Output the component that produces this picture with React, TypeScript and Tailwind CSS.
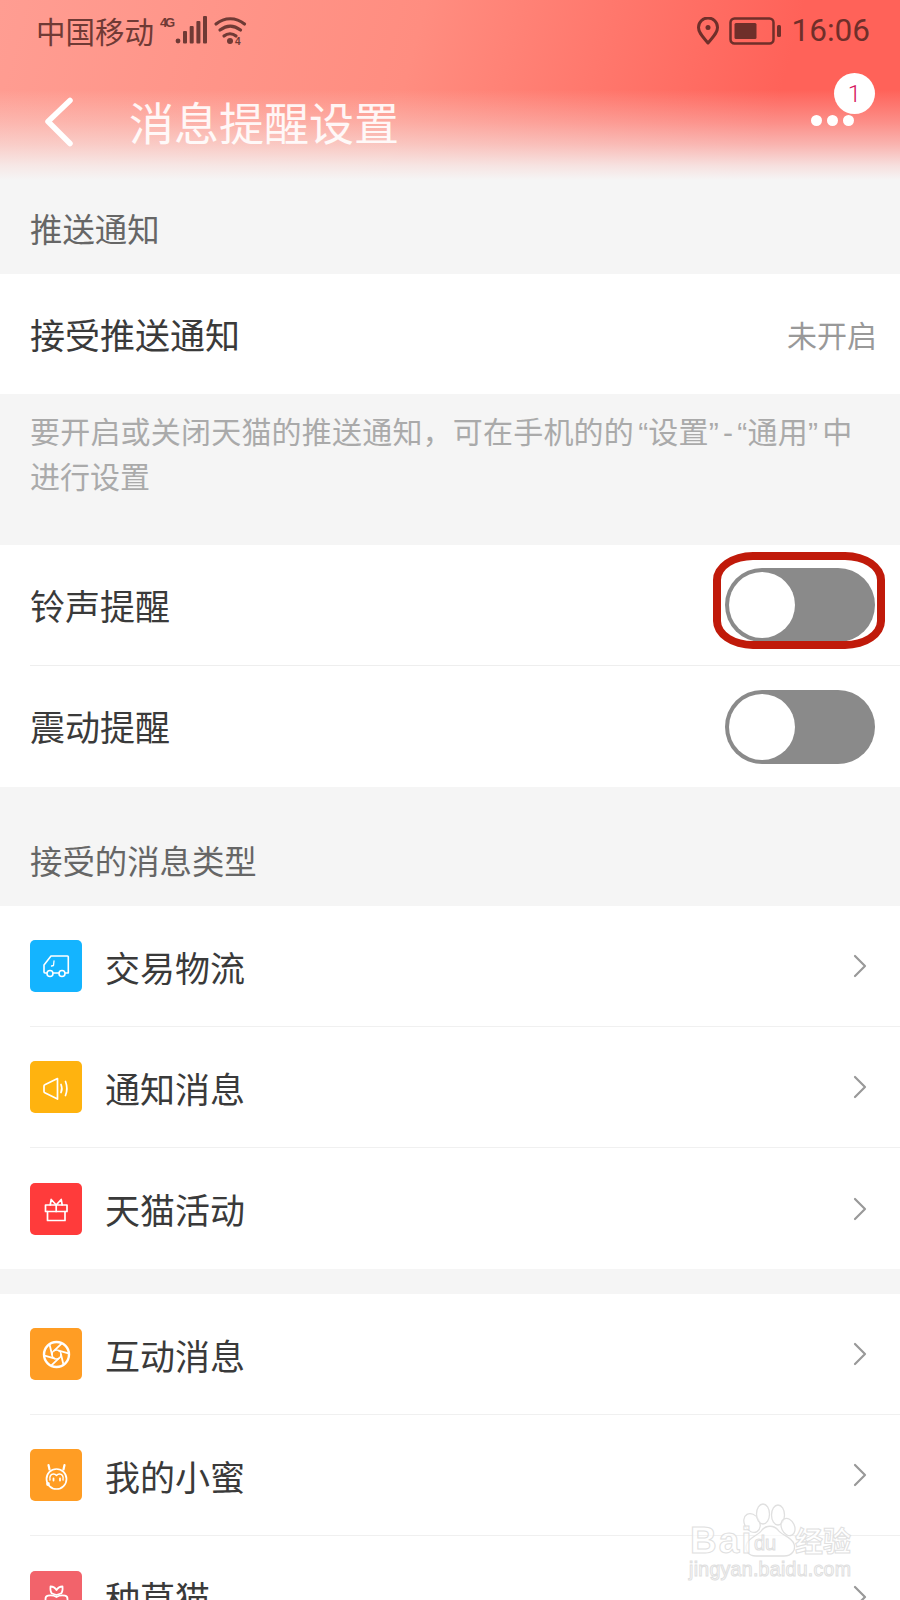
import type { ReactNode } from "react";

const cjk = "font-['Noto_Sans_CJK_SC','Noto_Sans',sans-serif]";

function Chevron() {
  return (
    <svg width="14" height="24" viewBox="0 0 14 24" fill="none" className="shrink-0">
      <path d="M2 2l10 10L2 22" stroke="#999" strokeWidth="2.2" strokeLinecap="round" strokeLinejoin="round" />
    </svg>
  );
}

function Switch() {
  return (
    <div className="flex h-[74px] w-[150px] items-center rounded-full bg-[#8a8a8a] pl-[4px]">
      <div className="h-[66px] w-[66px] rounded-full bg-white" />
    </div>
  );
}

function SectionTitle({ children }: { children: ReactNode }) {
  return (
    <div className="flex h-[94px] items-center bg-[#f5f5f5] pl-[30px] pt-[2px] text-[32.4px] text-[#666]">
      {children}
    </div>
  );
}

const truck = (
  <g fill="none" stroke="#fff" strokeWidth="1.6" strokeLinecap="round" strokeLinejoin="round">
    <path d="M16.500 33H15c-.6 0-1-.4-1-1v-7l7-9h16.500a.8.8 0 01.8.8V33h-3" />
    <path d="M23 33h6" />
    <path d="M24 21l-.5 4.500-2 .5" strokeWidth="1.300" />
    <circle cx="20" cy="33.500" r="3" />
    <circle cx="32" cy="33.500" r="3" />
  </g>
);

const speaker = (
  <g fill="none" stroke="#fff" strokeWidth="1.700" strokeLinecap="round" strokeLinejoin="round">
    <path d="M14 25v5.500c0 .6.300 1 .8 1.200L27.500 38V17.500L14.800 23.800c-.5.200-.8.600-.8 1.200z" />
    <path d="M31 23.500c1.200 2.700 1.200 5.300 0 8" />
    <path d="M35.500 20.500c1.800 4.600 1.800 9.400 0 14" />
  </g>
);

const gift = (
  <g fill="none" stroke="#fff" strokeWidth="1.700" strokeLinecap="round" strokeLinejoin="round">
    <rect x="15.500" y="22" width="21.500" height="6.500" />
    <path d="M17.500 28.500V37.500H35V28.500" />
    <path d="M26.200 22v6.500" />
    <path d="M26.200 22l-5-5.500-1 5.500M26.200 22l5-5.500 1 5.500" />
  </g>
);

// six aperture blades between the hub and the ring
const blades = [0, 60, 120, 180, 240, 300].map((d) => {
  const a = (d * Math.PI) / 180;
  const b = ((d + 55) * Math.PI) / 180;
  return `M${26.5 + 4.5 * Math.cos(a)} ${26.5 + 4.5 * Math.sin(a)}L${26.5 + 12 * Math.cos(b)} ${26.5 + 12 * Math.sin(b)}`;
});

const shutter = (
  <g fill="none" stroke="#fff" strokeWidth="1.800" strokeLinecap="round">
    <circle cx="26.500" cy="26.500" r="12.500" strokeWidth="2.400" />
    <circle cx="26.500" cy="26.500" r="4.500" strokeWidth="1.600" />
    {blades.map((d) => (
      <path key={d} d={d} />
    ))}
  </g>
);

const mi = (
  <g fill="none" stroke="#fff" strokeWidth="1.700" strokeLinecap="round" strokeLinejoin="round">
    <circle cx="26.500" cy="30" r="10" />
    <path d="M18.500 16l1 4.500M34.500 16l-1 4.500" strokeWidth="2.200" />
    <path d="M20 31c-.8-4 1-6 3.500-6 1.300 0 2.300.6 3 1.500.7-.9 1.700-1.500 3-1.500 2.500 0 4.300 2 3.500 6" strokeWidth="1.400" />
    <path d="M23.500 29.500v2M30 29.500v2" strokeWidth="1.800" />
    <circle cx="18" cy="35" r="1.900" fill="#fff" stroke="none" />
  </g>
);

const sprout = (
  <g fill="none" stroke="#fff" strokeWidth="1.800" strokeLinecap="round" strokeLinejoin="round">
    <path d="M15.500 38v-10c0-1.500 1-3 2.500-3.300 3-.5 6-.2 8.500 1.300 2.500-1.500 5.500-1.800 8.500-1.300 1.500.3 2.500 1.800 2.500 3.300v10c0 5-3 8-11 8s-11-3-11-8z" />
    <path d="M26.500 24l-4.500-1.500c-1.500-1.500-1.800-4-1.500-7 2.500 0 4.500 1 6 3.500 1.500-2.500 3.500-3.500 6-3.500.3 3 0 5.500-1.500 7z" />
  </g>
);

function ListRow({ color, icon, label, last }: { color: string; icon: ReactNode; label: string; last?: boolean }) {
  return (
    <div className="flex h-[121px] items-center pl-[30px]">
      <div className={`flex h-[121px] flex-1 items-center pr-[33px] ${last ? "" : "border-b border-[#f0f0f0]"}`}>
        <div className={`h-[52px] w-[52px] shrink-0 rounded-[5px] ${color}`}>
          <svg width="52" height="52" viewBox="0 0 52 52">
            {icon}
          </svg>
        </div>
        <span className="ml-[23px] flex-1 text-[35px] leading-none text-[#3a3a3a]">{label}</span>
        <Chevron />
      </div>
    </div>
  );
}

function StatusBar() {
  return (
    <div className="flex h-[61px] items-center justify-between pl-[36px] pr-[30px] text-[29.500px] text-[#6f3a35]">
      <div className="flex items-center">
        <span className="leading-none">中国移动</span>
        <svg width="92" height="30" viewBox="0 0 92 30" className="ml-[4px]" fill="#6f3a35">
          <text x="2" y="11" fontSize="13" fontWeight="700" fontFamily="Liberation Sans, sans-serif" textLength="15">
            4G
          </text>
          <circle cx="20" cy="25" r="2.400" />
          <rect x="25" y="15" width="4" height="12.500" rx="1" />
          <rect x="31.700" y="10" width="4" height="17.500" rx="1" />
          <rect x="38.400" y="5" width="4" height="22.500" rx="1" />
          <rect x="45" y="0" width="4" height="27.500" rx="1" />
          <g fill="none" stroke="#6f3a35" strokeWidth="3.200" strokeLinecap="round">
            <path d="M58 8c8.500-7 20-7 28.500 0" />
            <path d="M62 14c6.500-5 14-5 20.500 0" />
            <path d="M66 20c3.500-3 8.500-3 12 0" />
          </g>
          <circle cx="72" cy="25" r="3" />
          <text x="77" y="29" fontSize="10" fontWeight="700" fontFamily="Liberation Sans, sans-serif">
            4
          </text>
        </svg>
      </div>
      <div className="flex items-center">
        <svg width="24" height="28" viewBox="0 0 24 28" fill="none" stroke="#6f2f2a" strokeWidth="3">
          <path d="M12 26C7 20 2.500 16 2.500 10.500a9.500 9.500 0 0119 0C21.500 16 17 20 12 26z" strokeLinejoin="round" />
          <circle cx="12" cy="10.500" r="2.500" fill="#6f2f2a" stroke="none" />
        </svg>
        <svg width="54" height="28" viewBox="0 0 54 28" className="ml-[9px]" fill="#6f2f2a">
          <rect x="1.500" y="1.500" width="43" height="25" rx="4" fill="none" stroke="#6f2f2a" strokeWidth="2.500" />
          <rect x="5.500" y="6" width="22" height="16" rx="1.500" />
          <rect x="48" y="8" width="4" height="12" rx="1.500" />
        </svg>
        <span className="ml-[9px] font-['Roboto',sans-serif] text-[31.500px] leading-none text-[#6f2f2a]">16:06</span>
      </div>
    </div>
  );
}

function Watermark() {
  return (
    <div className="absolute left-[688px] top-[1500px] h-[90px] w-[170px]">
      <svg width="170" height="60" viewBox="0 0 170 60" className="absolute left-0 top-0" fill="rgba(255,255,255,0.6)" stroke="#e0e0e0" strokeWidth="1.300">
        <ellipse cx="64" cy="23" rx="7.500" ry="10" transform="rotate(-30 64 23)" />
        <ellipse cx="75" cy="14" rx="6.500" ry="10" />
        <ellipse cx="90" cy="15" rx="6.500" ry="10" />
        <ellipse cx="100" cy="27" rx="6.500" ry="9" transform="rotate(-25 100 27)" />
        <path d="M68 56c-8 0-12-6-9-13 3-6 12-8 15-13 4-5 12-5 16 0 3 5 14 7 16 14 2 6-2 12-10 12z" />
      </svg>
      <span className="absolute left-[2px] top-[22px] font-['Liberation_Sans',sans-serif] text-[37px] font-bold leading-none tracking-[2px] text-white/70 [-webkit-text-stroke:1px_#e0e0e0]">
        Bai
      </span>
      <span className="absolute left-[66px] top-[33px] font-['Liberation_Sans',sans-serif] text-[20px] leading-none text-white/70 [-webkit-text-stroke:1px_#e0e0e0]">
        du
      </span>
      <span className="absolute left-[107px] top-[26px] text-[28px] font-bold leading-none text-white/70 [-webkit-text-stroke:1px_#e0e0e0]">
        经验
      </span>
      <span className="absolute left-[1px] top-[60px] font-['Liberation_Sans',sans-serif] text-[19.500px] leading-none tracking-[0.300px] text-white/70 [-webkit-text-stroke:1px_#e0e0e0]">
        jingyan.baidu.com
      </span>
    </div>
  );
}

export default function App() {
  return (
    <div className={`relative h-[1600px] w-[900px] overflow-hidden bg-[#f5f5f5] ${cjk}`}>
      {/* Header */}
      <div className="h-[180px] bg-[linear-gradient(180deg,rgba(245,245,245,0)_50%,rgba(245,245,245,0.3)_68%,rgba(245,245,245,0.55)_80%,rgba(245,245,245,0.85)_92%,#f5f5f5_100%),linear-gradient(105deg,#ff9d92_0%,#ff8d80_45%,#ff6259_85%,#ff6259_100%)]">
        <StatusBar />
        <div className="flex h-[119px] items-start pl-[44px] pr-[46px] pt-[36px]">
          <svg width="30" height="50" viewBox="0 0 30 50" fill="none" className="shrink-0">
            <path d="M26 3.500L4 24.500l22 22" stroke="#fff" strokeWidth="5.500" strokeLinecap="round" strokeLinejoin="round" />
          </svg>
          <span className="ml-[55px] text-[45px] leading-[50px] text-white/90">消息提醒设置</span>
          <div className="ml-auto mt-[18px] flex gap-[5px]">
            <div className="h-[11px] w-[11px] rounded-full bg-white" />
            <div className="h-[11px] w-[11px] rounded-full bg-white" />
            <div className="h-[11px] w-[11px] rounded-full bg-white" />
          </div>
        </div>
      </div>
      <div className="absolute left-[834px] top-[73px] flex h-[41px] w-[41px] items-center justify-center rounded-full bg-white font-['Roboto',sans-serif] text-[24px] font-light text-[#d6175f]">
        1
      </div>

      <SectionTitle>推送通知</SectionTitle>
      <div className="flex h-[120px] items-center justify-between bg-white pl-[30px] pr-[23px]">
        <span className="text-[35px] text-[#3a3a3a]">接受推送通知</span>
        <span className="text-[30px] text-[#999]">未开启</span>
      </div>

      <div className="h-[151px] pl-[30px] pr-[30px] pt-[16px] font-['Liberation_Sans','Noto_Sans_CJK_SC',sans-serif] text-[30px] leading-[45px] text-[#aaa]">
        <div className="whitespace-nowrap tracking-[0.2px] [word-spacing:-4.4px]">要开启或关闭天猫的推送通知，可在手机的的 “设置” - “通用” 中</div>
        <div>进行设置</div>
      </div>

      <div className="bg-white pl-[30px]">
        <div className="flex h-[121px] items-center justify-between border-b border-[#eee] pr-[25px]">
          <span className="text-[35px] text-[#3a3a3a]">铃声提醒</span>
          <Switch />
        </div>
        <div className="flex h-[121px] items-center justify-between pr-[25px]">
          <span className="text-[35px] text-[#3a3a3a]">震动提醒</span>
          <Switch />
        </div>
      </div>
      {/* red annotation around the first switch */}
      <div className="absolute left-[713px] top-[552px] h-[97px] w-[172px] rounded-[40px/28px] border-[8px] border-[#c01a0a]" />

      <div className="h-[25px]" />
      <SectionTitle>接受的消息类型</SectionTitle>

      <div className="bg-white">
        <ListRow color="bg-[#14b4ff]" icon={truck} label="交易物流" />
        <ListRow color="bg-[#ffb30f]" icon={speaker} label="通知消息" />
        <ListRow color="bg-[#ff3b3b]" icon={gift} label="天猫活动" last />
      </div>
      <div className="h-[25px]" />
      <div className="bg-white">
        <ListRow color="bg-[#ff9d24]" icon={shutter} label="互动消息" />
        <ListRow color="bg-[#ff9d24]" icon={mi} label="我的小蜜" />
        <ListRow color="bg-[#f2636b]" icon={sprout} label="种草猫" last />
      </div>

      <Watermark />
    </div>
  );
}
